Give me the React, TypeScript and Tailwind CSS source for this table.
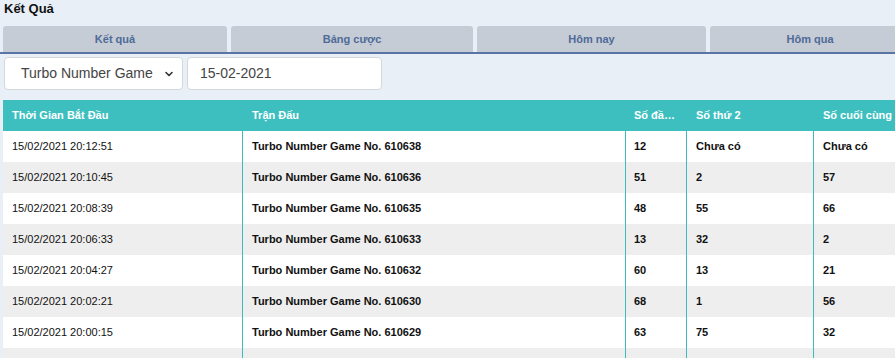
const tabs = [
  { label: "Kết quả", w: "w-[224px]" },
  { label: "Bảng cược", w: "w-[242px]" },
  { label: "Hôm nay", w: "w-[229px]" },
  { label: "Hôm qua", w: "w-[200px]" },
];

const rows = [
  ["15/02/2021 20:12:51", "Turbo Number Game No. 610638", "12", "Chưa có", "Chưa có"],
  ["15/02/2021 20:10:45", "Turbo Number Game No. 610636", "51", "2", "57"],
  ["15/02/2021 20:08:39", "Turbo Number Game No. 610635", "48", "55", "66"],
  ["15/02/2021 20:06:33", "Turbo Number Game No. 610633", "13", "32", "2"],
  ["15/02/2021 20:04:27", "Turbo Number Game No. 610632", "60", "13", "21"],
  ["15/02/2021 20:02:21", "Turbo Number Game No. 610630", "68", "1", "56"],
  ["15/02/2021 20:00:15", "Turbo Number Game No. 610629", "63", "75", "32"],
  ["", "", "", "", ""],
];

export default function App() {
  return (
    <div
      className="h-[358px] w-[895px] overflow-hidden bg-[#e9eff7] text-[#111]"
      style={{ fontFamily: '"Liberation Sans", Arial, sans-serif' }}
    >
      <div className="h-[26px] pl-[4px] pt-[1px] text-[13px] font-bold leading-[16px] text-[#111]">
        Kết Quả
      </div>

      <div className="flex w-[900px] gap-[4px] border-b-2 border-[#5a74a6] pl-[3px]">
        {tabs.map((t) => (
          <div
            key={t.label}
            className={`${t.w} flex h-[26px] shrink-0 items-center justify-center rounded-t-[3px] bg-[#c5ccd6] text-[11px] font-bold text-[#4f6a96]`}
          >
            {t.label}
          </div>
        ))}
      </div>

      <div className="mt-[3px] flex gap-[4px] pl-[4px]">
        <div className="flex h-[33px] w-[179px] items-center justify-between rounded-[4px] border border-[#d4d8dd] bg-white pl-[16px] pr-[8px] text-[14px] text-[#444]">
          <span>Turbo Number Game</span>
          <svg width="10" height="10" viewBox="0 0 10 10" fill="none">
            <path d="M2 3.5 5 6.5 8 3.5" stroke="#333" strokeWidth="1.6" strokeLinecap="round" strokeLinejoin="round" />
          </svg>
        </div>
        <div className="flex h-[33px] w-[195px] items-center rounded-[4px] border border-[#d4d8dd] bg-white pl-[12px] text-[14px] text-[#444]">
          15-02-2021
        </div>
      </div>

      <div className="ml-[3px] mt-[10px] w-[900px] text-[11px]">
        <div className="flex h-[31px] items-center bg-[#3dbfbf] font-bold text-white">
          <div className="w-[239px] shrink-0 pl-[9px]">Thời Gian Bắt Đầu</div>
          <div className="w-[383px] shrink-0 pl-[10px]">Trận Đấu</div>
          <div className="w-[61px] shrink-0 truncate pl-[9px] pr-[6px]">Số đầu tiên</div>
          <div className="w-[127px] shrink-0 pl-[10px]">Số thứ 2</div>
          <div className="shrink-0 pl-[10px]">Số cuối cùng</div>
        </div>
        {rows.map((r, i) => (
          <div
            key={i}
            className={`flex h-[31px] items-stretch ${i % 2 === 0 ? "bg-white" : "bg-[#eeeeee]"}`}
          >
            <div className="flex w-[239px] shrink-0 items-center pl-[9px]">{r[0]}</div>
            <div className="flex w-[383px] shrink-0 items-center border-l border-[#3dbaba] pl-[9px] font-bold">
              {r[1]}
            </div>
            <div className="flex w-[61px] shrink-0 items-center border-l border-[#3dbaba] pl-[8px] font-bold">
              {r[2]}
            </div>
            <div className="flex w-[127px] shrink-0 items-center border-l border-[#3dbaba] pl-[9px] font-bold">
              {r[3]}
            </div>
            <div className="flex flex-1 items-center border-l border-[#3dbaba] pl-[9px] font-bold">
              {r[4]}
            </div>
          </div>
        ))}
      </div>
    </div>
  );
}
